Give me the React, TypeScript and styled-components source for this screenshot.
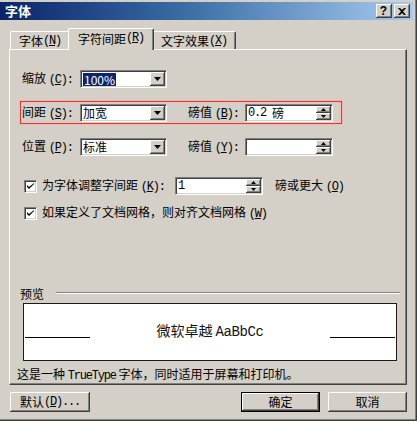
import React from 'react';
import styled, { createGlobalStyle, css } from 'styled-components';

const Global = createGlobalStyle`
  html, body { margin: 0; padding: 0; background: #D4D0C8; }
  body {
    font-family: "Noto Sans CJK SC", "Liberation Sans", sans-serif;
    font-size: 12px;
    color: #000;
  }
  * { box-sizing: border-box; }
`;

const raised = css`
  background: #D4D0C8;
  box-shadow: inset -1px -1px #404040, inset 1px 1px #ffffff, inset -2px -2px #808080;
`;

const sunken = css`
  border-top: 1px solid #808080;
  border-left: 1px solid #808080;
  border-right: 1px solid #ffffff;
  border-bottom: 1px solid #ffffff;
  box-shadow: inset 1px 1px #404040, inset -1px -1px #D4D0C8;
`;

const Window = styled.div`
  width: 417px;
  height: 421px;
  background: #D4D0C8;
  padding: 2px 4px 0 0;
  box-shadow: inset -1px -1px #404040, inset -2px -2px #808080;
  display: flex;
  flex-direction: column;
  overflow: hidden;
`;

const TitleBar = styled.div`
  height: 18px;
  display: flex;
  align-items: center;
  justify-content: space-between;
  background: linear-gradient(90deg, #0A246A 0%, #3A6EA5 45%, #A6CAF0 100%);
  padding: 0 3px 0 5px;
`;

const Title = styled.span`
  color: #fff;
  font-weight: bold;
  font-size: 13px;
  line-height: 18px;
`;

const CaptionButtons = styled.div`
  display: flex;
  gap: 2px;
`;

const CaptionButton = styled.div`
  ${raised};
  width: 16px;
  height: 14px;
  display: flex;
  align-items: center;
  justify-content: center;
  font-family: "Liberation Sans", sans-serif;
  font-weight: bold;
  font-size: 12px;
  line-height: 14px;
  padding-right: 1px;
`;

const TabStrip = styled.div`
  display: flex;
  align-items: flex-end;
  padding-left: 10px;
  margin-top: 8px;
  height: 21px;
  position: relative;
  z-index: 1;
`;

const Tab = styled.div<{ $active?: boolean; $w: number; $ml?: number }>`
  width: ${(p) => p.$w}px;
  height: ${(p) => (p.$active ? 22 : 18)}px;
  margin-bottom: ${(p) => (p.$active ? -1 : 0)}px;
  margin-left: ${(p) => p.$ml ?? 0}px;
  background: #D4D0C8;
  border-top: 1px solid #fff;
  border-left: 1px solid #fff;
  border-right: 1px solid #404040;
  box-shadow: inset -1px 0 #808080;
  border-radius: 2px 2px 0 0;
  display: flex;
  align-items: center;
  justify-content: center;
  padding-bottom: ${(p) => (p.$active ? 3 : 0)}px;
  position: relative;
  z-index: ${(p) => (p.$active ? 2 : 1)};
  white-space: nowrap;
  font-size: 12px;
`;

const Panel = styled.div`
  margin-left: 9px;
  width: 398px;
  height: 336px;
  border-top: 1px solid #fff;
  border-left: 1px solid #fff;
  border-right: 1px solid #404040;
  border-bottom: 1px solid #404040;
  box-shadow: inset -1px -1px #808080;
  display: flex;
  flex-direction: column;
  padding: 20px 0 0 12px;
`;

const Row = styled.div<{ $mt?: number; $h?: number }>`
  display: flex;
  align-items: center;
  height: ${(p) => p.$h ?? 18}px;
  margin-top: ${(p) => p.$mt ?? 0}px;
  white-space: nowrap;
`;

const Highlight = styled.div`
  display: flex;
  align-items: center;
  margin: 13px 0 0 -2px;
  width: 322px;
  height: 23px;
  padding-left: 1px;
  border: 1px solid #D83A3A;
  box-shadow: 0 0 0 1px #F2B8B0, inset 0 0 0 1px #F0C4BC;
  white-space: nowrap;
`;

const Label = styled.span<{ $w: number; $ml?: number }>`
  display: inline-block;
  width: ${(p) => p.$w}px;
  margin-left: ${(p) => p.$ml ?? 0}px;
  line-height: 14px;
`;

const U = styled.span`
  text-decoration: underline;
  text-underline-offset: 1px;
`;

const Key = styled.span`
  font-family: "Liberation Mono", monospace;
  font-size: 12px;
  letter-spacing: -1.2px;
`;

const Unit = styled.span`
  margin-left: 6px;
`;

const Field = styled.div<{ $w: number; $ml?: number }>`
  ${sunken};
  width: ${(p) => p.$w}px;
  height: 18px;
  background: #fff;
  display: flex;
  align-items: stretch;
  padding: 1px;
  margin-left: ${(p) => p.$ml ?? 0}px;
`;

const FieldText = styled.div`
  flex: 1;
  display: flex;
  align-items: center;
  padding-left: 1px;
  line-height: 14px;
  white-space: nowrap;
`;

const Selected = styled.span`
  background: #0A246A;
  color: #fff;
  padding: 0 1px;
  line-height: 13px;
`;

const DropButton = styled.div`
  ${raised};
  width: 15px;
  display: flex;
  align-items: center;
  justify-content: center;
`;

const SpinCol = styled.div`
  width: 15px;
  display: flex;
  flex-direction: column;
`;

const SpinHalf = styled.div`
  ${raised};
  flex: 1;
  display: flex;
  align-items: center;
  justify-content: center;
`;

const CheckBox = styled.div`
  ${sunken};
  width: 13px;
  height: 13px;
  background: #fff;
  margin-left: 2px;
  margin-right: 5px;
  display: flex;
  align-items: center;
  justify-content: center;
`;

const GroupRow = styled.div`
  display: flex;
  align-items: center;
  height: 14px;
  margin: 65px 0 0 -2px;
  width: 380px;
`;

const Etched = styled.div`
  flex: 1;
  height: 2px;
  border-top: 1px solid #808080;
  border-bottom: 1px solid #fff;
  margin-left: 12px;
`;

const PreviewBox = styled.div`
  margin: 3px 0 0 1px;
  width: 374px;
  height: 58px;
  background: #fff;
  border: 1px solid #1a1a1a;
  display: flex;
  align-items: flex-end;
  padding: 0 1px 20px 1px;
`;

const PreviewLine = styled.div`
  width: 65px;
  height: 1px;
  background: #000;
  margin-bottom: 2px;
`;

const PreviewText = styled.div`
  flex: 1;
  text-align: center;
  font-size: 14px;
  line-height: 16px;
  white-space: nowrap;
  color: #111;
`;

const PreviewLatin = styled.span`
  font-family: "Liberation Mono", monospace;
  font-size: 14px;
  letter-spacing: -0.4px;
`;

const Status = styled.div`
  margin: 6px 0 0 -5px;
  height: 14px;
  line-height: 14px;
  white-space: nowrap;
`;

const Footer = styled.div`
  display: flex;
  margin-top: 7px;
  padding-left: 10px;
`;

const Button = styled.div<{ $w: number; $ml?: number; $default?: boolean }>`
  ${raised};
  width: ${(p) => p.$w}px;
  height: 20px;
  margin-left: ${(p) => p.$ml ?? 0}px;
  display: flex;
  align-items: center;
  justify-content: center;
  line-height: 14px;
  ${(p) =>
    p.$default &&
    css`
      box-shadow: inset 0 0 0 1px #000, inset -2px -2px #404040, inset 2px 2px #ffffff,
        inset -3px -3px #808080;
    `}
`;

const ArrowDown = () => (
  <svg width="7" height="4" viewBox="0 0 7 4">
    <path d="M0 0h7L3.5 4z" fill="#000" />
  </svg>
);

const SmallUp = () => (
  <svg width="5" height="3" viewBox="0 0 5 3">
    <path d="M2.5 0L5 3H0z" fill="#000" />
  </svg>
);

const SmallDown = () => (
  <svg width="5" height="3" viewBox="0 0 5 3">
    <path d="M0 0h5L2.5 3z" fill="#000" />
  </svg>
);

const Combo = ({ children, ml }: { children: React.ReactNode; ml?: number }) => (
  <Field $w={87} $ml={ml}>
    <FieldText>{children}</FieldText>
    <DropButton>
      <ArrowDown />
    </DropButton>
  </Field>
);

const Spin = ({ children, w, ml }: { children?: React.ReactNode; w: number; ml?: number }) => (
  <Field $w={w} $ml={ml}>
    <FieldText>{children}</FieldText>
    <SpinCol>
      <SpinHalf>
        <SmallUp />
      </SpinHalf>
      <SpinHalf>
        <SmallDown />
      </SpinHalf>
    </SpinCol>
  </Field>
);

const Check = () => (
  <CheckBox>
    <svg width="7" height="7" viewBox="0 0 7 7">
      <path d="M0 2v2l2 2 5-5V0L2 4z" fill="#000" />
    </svg>
  </CheckBox>
);

const CloseGlyph = () => (
  <svg width="8" height="7" viewBox="0 0 8 7">
    <path d="M0 0h2l2 2 2-2h2L5 3.5 8 7H6L4 5 2 7H0l3-3.5z" fill="#000" />
  </svg>
);

export default function App() {
  return (
    <>
      <Global />
      <Window>
        <TitleBar>
          <Title>字体</Title>
          <CaptionButtons>
            <CaptionButton>?</CaptionButton>
            <CaptionButton>
              <CloseGlyph />
            </CaptionButton>
          </CaptionButtons>
        </TitleBar>

        <TabStrip>
          <Tab $w={60}>
            字体 <Key>(<U>N</U>)</Key>
          </Tab>
          <Tab $w={86} $ml={-2} $active>
            字符间距 <Key>(<U>R</U>)</Key>
          </Tab>
          <Tab $w={84} $ml={-2}>
            文字效果 <Key>(<U>X</U>)</Key>
          </Tab>
        </TabStrip>

        <Panel>
          <Row>
            <Label $w={58}>
              缩放 <Key>(<U>C</U>):</Key>
            </Label>
            <Combo>
              <Selected>100%</Selected>
            </Combo>
          </Row>

          <Highlight>
            <Label $w={58}>
              间距 <Key>(<U>S</U>):</Key>
            </Label>
            <Combo>加宽</Combo>
            <Label $w={57} $ml={21}>
              磅值 <Key>(<U>B</U>):</Key>
            </Label>
            <Spin w={88}>
              <Key>0.2</Key>
              <Unit>磅</Unit>
            </Spin>
          </Highlight>

          <Row $mt={14}>
            <Label $w={58}>
              位置 <Key>(<U>P</U>):</Key>
            </Label>
            <Combo>标准</Combo>
            <Label $w={57} $ml={21}>
              磅值 <Key>(<U>Y</U>):</Key>
            </Label>
            <Spin w={88} />
          </Row>

          <Row $mt={21} $h={18}>
            <Check />
            <Label $w={133}>
              为字体调整字间距 <Key>(<U>K</U>):</Key>
            </Label>
            <Spin w={88}>
              <Key>1</Key>
            </Spin>
            <Label $w={80} $ml={12}>
              磅或更大 <Key>(<U>O</U>)</Key>
            </Label>
          </Row>

          <Row $mt={10} $h={16}>
            <Check />
            <Label $w={240}>
              如果定义了文档网格，则对齐文档网格 <Key>(<U>W</U>)</Key>
            </Label>
          </Row>

          <GroupRow>
            预览
            <Etched />
          </GroupRow>

          <PreviewBox>
            <PreviewLine />
            <PreviewText>
              微软卓越 <PreviewLatin>AaBbCc</PreviewLatin>
            </PreviewText>
            <PreviewLine />
          </PreviewBox>

          <Status>
            这是一种 <Key>TrueType</Key> 字体，同时适用于屏幕和打印机。
          </Status>
        </Panel>

        <Footer>
          <Button $w={80}>
            默认 <Key>(<U>D</U>)...</Key>
          </Button>
          <Button $w={79} $ml={151} $default>
            确定
          </Button>
          <Button $w={79} $ml={8}>
            取消
          </Button>
        </Footer>
      </Window>
    </>
  );
}
